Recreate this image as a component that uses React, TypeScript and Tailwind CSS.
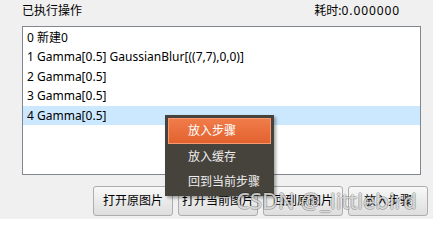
const rows = [
  "0 新建0",
  "1 Gamma[0.5] GaussianBlur[((7,7),0,0)]",
  "2 Gamma[0.5]",
  "3 Gamma[0.5]",
  "4 Gamma[0.5]",
];

const buttons = ["打开原图片", "打开当前图片", "回到原图片", "放入步骤"];

const menuItems = ["放入步骤", "放入缓存", "回到当前步骤"];

export default function App() {
  return (
    <div
      className="relative w-[433px] h-[219px] overflow-hidden bg-[#f0f0f0] text-[12px] text-black"
      style={{ fontFamily: '"Noto Sans", "Noto Sans CJK SC", sans-serif' }}
    >
      {/* header */}
      <div className="flex justify-between h-[26px] pl-[22px] pr-[33px] pt-[2px] leading-[18px]">
        <span>已执行操作</span>
        <span>
          耗时:<span className="tracking-[0.9px]">0.000000</span>
        </span>
      </div>

      {/* list */}
      <div className="ml-[22px] w-[399px] h-[149px] border border-[#82878f] bg-white pt-px">
        {rows.map((r, i) => (
          <div
            key={i}
            className={
              "h-[19.4px] leading-[19px] pl-[4px] whitespace-nowrap " +
              (i === 4 ? "bg-[#cce8ff]" : "")
            }
          >
            {r}
          </div>
        ))}
      </div>

      {/* buttons */}
      <div className="flex gap-[5px] pl-[93px] mt-[11px]">
        {buttons.map((b) => (
          <button
            key={b}
            className="w-[80px] h-[30px] rounded-[3px] border border-[#adadad] bg-gradient-to-b from-[#f8f8f8] to-[#dedede] text-[12px] leading-[28px]"
          >
            {b}
          </button>
        ))}
      </div>

      {/* context menu */}
      <div className="absolute left-[165px] top-[115px] w-[109px] h-[81px] bg-[#46433d] shadow-[2px_2px_3px_rgba(0,0,0,0.35)] pt-[3px] px-[3px]">
        {menuItems.map((m, i) => (
          <div
            key={m}
            className={
              "h-[25.5px] leading-[24px] pl-[19px] whitespace-nowrap " +
              (i === 0
                ? "bg-gradient-to-b from-[#f07c4a] to-[#e2622f] border border-[#f59a6e] text-white"
                : "text-[#ececec] border border-transparent")
            }
          >
            {m}
          </div>
        ))}
      </div>

      {/* watermark */}
      <div
        className="absolute left-[236px] top-[186px] text-[22px] leading-[28px] text-[#f4f4f4]/80 whitespace-nowrap pointer-events-none"
        style={{
          textShadow:
            "1px 0 0 rgba(0,0,0,0.22), -1px 0 0 rgba(0,0,0,0.22), 0 1px 0 rgba(0,0,0,0.22), 0 -1px 0 rgba(0,0,0,0.22)",
        }}
      >
        CSDN @_littlebird
      </div>
    </div>
  );
}
